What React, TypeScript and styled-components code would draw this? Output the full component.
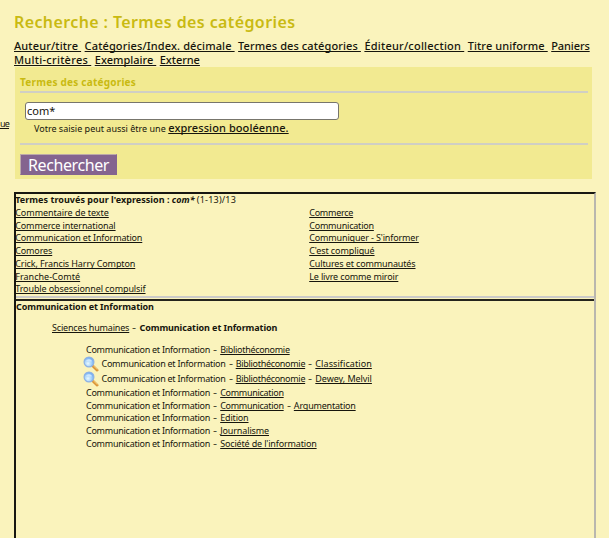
import React from "react";
import styled, { createGlobalStyle } from "styled-components";

const GlobalStyle = createGlobalStyle`
  * { box-sizing: border-box; }
  body {
    margin: 0;
    height: 538px;
    overflow: hidden;
    background: #faf3bc;
    color: #16150c;
    font-family: "Noto Sans", "Open Sans", sans-serif;
  }
`;

const Page = styled.div`
  display: grid;
  grid-template-columns: 14px 582px;
  height: 538px;
  overflow: hidden;
`;

const Side = styled.aside`
  padding-top: 117px;
  display: flex;
  align-items: flex-start;
`;

const Main = styled.main`
  display: flex;
  flex-direction: column;
`;

const Link = styled.a<{ $ls?: number }>`
  color: inherit;
  white-space: pre;
  letter-spacing: ${(p) => p.$ls ?? 0}px;
  text-decoration: underline;
  text-decoration-thickness: 1px;
  text-decoration-skip-ink: none;
  text-underline-offset: 1px;
`;

const SideLink = styled(Link)`
  font-size: 9px;
  line-height: 13px;
`;

const Title = styled.h1`
  margin: 11px 0 0;
  height: 28px;
  font-size: 16px;
  line-height: 22px;
  font-weight: 600;
  letter-spacing: 0.39px;
  color: #c9ba12;
  white-space: nowrap;
`;

const Nav = styled.nav`
  display: flex;
  flex-direction: column;
  height: 28px;
  font-size: 11px;
  line-height: 14px;
  font-weight: 500;
`;

const NavRow = styled.div`
  display: flex;
  gap: 3.5px;
`;

const Panel = styled.form`
  margin: 0 0 0 1px;
  width: 577px;
  height: 112px;
  padding: 8px 4px 0 5px;
  background: #f2ea91;
  display: flex;
  flex-direction: column;
  align-items: flex-start;
`;

const PanelTitle = styled.h2`
  margin: 0;
  height: 16px;
  font-size: 10px;
  line-height: 14px;
  font-weight: 700;
  letter-spacing: 0.23px;
  color: #c9ba12;
`;

const Rule = styled.div`
  flex: none;
  align-self: stretch;
  height: 2px;
  background: #d0cfc4;
`;

const SearchInput = styled.input`
  margin: 9px 0 0 5px;
  width: 314px;
  height: 18px;
  padding: 0 1px 2px;
  border: 1px solid #77756c;
  border-radius: 3px;
  background: #fff;
  color: #16150c;
  font: 11px "Noto Sans", sans-serif;
  outline: none;
`;

const Hint = styled.div`
  display: flex;
  align-items: baseline;
  gap: 2.5px;
  height: 23px;
  padding-left: 14px;
  font-size: 9px;
  line-height: 16px;
`;

const HintLink = styled(Link)`
  font-size: 11px;
  font-weight: 500;
`;

const Submit = styled.button`
  margin-top: 9px;
  width: 97px;
  height: 21px;
  padding: 0;
  border: 1px solid;
  border-color: #bcaaa8 #84648f #84648f #bcaaa8;
  background: #84648f;
  color: #fff;
  font: 16px/18px "Noto Sans", sans-serif;
  letter-spacing: -0.41px;
`;

const Frame = styled.section`
  margin-top: 13px;
  flex: 1;
  border-style: solid;
  border-width: 2px 2px 0 2px;
  border-color: #171711 #b9b7ae #b9b7ae #171711;
  font-size: 9px;
  line-height: 12.75px;
`;

const Found = styled.div`
  height: 102px;
  margin-left: -0.8px;
`;

const FoundHead = styled.div`
  display: flex;
  gap: 2.3px;
  white-space: pre;
`;

const Columns = styled.div`
  display: grid;
  grid-template-columns: 294px 1fr;
`;

const Column = styled.div`
  display: flex;
  flex-direction: column;
  align-items: flex-start;
`;

const Divider = styled.div`
  height: 5px;
  border-top: 2px solid #cbcac8;
  border-bottom: 2px solid #24231c;
`;

const Text = styled.span<{ $ls?: number }>`
  white-space: pre;
  letter-spacing: ${(p) => p.$ls ?? 0}px;
`;

const Strong = styled(Text).attrs({ as: "strong" })`
  font-weight: 700;
`;

const Em = styled(Strong)`
  font-style: italic;
`;

const Path = styled.div`
  display: flex;
  margin: 8.5px 0 8.5px 36px;
`;

const Tree = styled.div`
  padding-left: 67px;
  display: flex;
  flex-direction: column;
`;

const Row = styled.div<{ $icon?: boolean }>`
  display: flex;
  align-items: ${(p) => (p.$icon ? "center" : "baseline")};
  height: ${(p) => (p.$icon ? 15.25 : 12.75)}px;
  padding-left: ${(p) => (p.$icon ? 0 : 3)}px;
`;

const Sep = styled.span`
  display: inline-block;
  width: 10.2px;
  text-align: center;
  transform: scaleX(1.4);
`;

const Lens = styled.svg`
  flex: none;
  width: 16px;
  height: 16px;
  margin-right: 2.5px;
`;

const Magnifier = () => (
  <Lens viewBox="0 0 16 16">
    <defs>
      <radialGradient id="glass" cx="0.4" cy="0.65" r="0.7">
        <stop offset="0" stopColor="#e9f9ff" />
        <stop offset="0.5" stopColor="#a5d3fa" />
        <stop offset="1" stopColor="#5f9df0" />
      </radialGradient>
    </defs>
    <path d="M9.6 9.8L14.2 14.2" stroke="#d99438" strokeWidth="2.6" strokeLinecap="round" />
    <path d="M10.6 10L14.2 13.4" stroke="#f8cf78" strokeWidth="1" strokeLinecap="round" />
    <circle cx="6" cy="6" r="4.9" fill="url(#glass)" stroke="#8eb2e4" strokeWidth="1.2" />
    <path d="M3 5.2C4 2.6 8 2.6 9 5.2C7 6.4 5 4.6 3 5.2Z" fill="#d8ecff" opacity="0.75" />
  </Lens>
);

type Item = [string, number];

const nav: Item[][] = [
  [
    ["Auteur/titre ", 0.13],
    ["Catégories/Index. décimale ", 0.12],
    ["Termes des catégories ", 0.1],
    ["Éditeur/collection ", 0.22],
    ["Titre uniforme ", 0.09],
    ["Paniers", -0.1],
  ],
  [
    ["Multi-critères ", 0.27],
    ["Exemplaire ", 0.02],
    ["Externe", -0.05],
  ],
];

const found: Item[][] = [
  [
    ["Commentaire de texte", -0.04],
    ["Commerce international", -0.11],
    ["Communication et Information", -0.15],
    ["Comores", -0.13],
    ["Crick, Francis Harry Compton", -0.11],
    ["Franche-Comté", 0.03],
    ["Trouble obsessionnel compulsif", -0.1],
  ],
  [
    ["Commerce", -0.25],
    ["Communication", -0.21],
    ["Communiquer - S'informer", -0.15],
    ["C'est compliqué", -0.09],
    ["Cultures et communautés", -0.13],
    ["Le livre comme miroir", -0.14],
  ],
];

const biblio: Item = ["Bibliothéconomie", -0.3];
const communication: Item = ["Communication", -0.3];

const tree: { icon?: boolean; links: Item[] }[] = [
  { links: [biblio] },
  { icon: true, links: [biblio, ["Classification", 0.08]] },
  { icon: true, links: [biblio, ["Dewey, Melvil", -0.05]] },
  { links: [communication] },
  { links: [communication, ["Argumentation", -0.2]] },
  { links: [["Edition", -0.16]] },
  { links: [["Journalisme", -0.13]] },
  { links: [["Société de l'information", -0.16]] },
];

const renderLinks = (items: Item[]) =>
  items.map(([label, ls]) => (
    <Link key={label} $ls={ls}>
      {label}
    </Link>
  ));

export default function App() {
  return (
    <>
      <GlobalStyle />
      <Page>
        <Side>
          <SideLink $ls={-0.8}>ue</SideLink>
        </Side>
        <Main>
          <Title>Recherche : Termes des catégories</Title>
          <Nav>
            {nav.map((row, i) => (
              <NavRow key={i}>{renderLinks(row)}</NavRow>
            ))}
          </Nav>
          <Panel>
            <PanelTitle>Termes des catégories</PanelTitle>
            <Rule />
            <SearchInput defaultValue="com*" />
            <Hint>
              <Text>Votre saisie peut aussi être une</Text>
              <HintLink $ls={0.08}>expression booléenne.</HintLink>
            </Hint>
            <Rule />
            <Submit type="button">Rechercher</Submit>
          </Panel>
          <Frame>
            <Found>
              <FoundHead>
                <Strong $ls={0.04}>Termes trouvés pour l'expression :</Strong>
                <Em>com*</Em>
                <Text $ls={0.2}>(1-13)/13</Text>
              </FoundHead>
              <Columns>
                {found.map((col, i) => (
                  <Column key={i}>{renderLinks(col)}</Column>
                ))}
              </Columns>
            </Found>
            <Divider />
            <Strong $ls={-0.08}>Communication et Information</Strong>
            <Path>
              <Link $ls={-0.17}>Sciences humaines</Link>
              <Sep>-</Sep>
              <Strong $ls={-0.08}>Communication et Information</Strong>
            </Path>
            <Tree>
              {tree.map((row, i) => (
                <Row key={i} $icon={row.icon}>
                  {row.icon && <Magnifier />}
                  <Text $ls={-0.26}>Communication et Information</Text>
                  {row.links.map(([label, ls]) => (
                    <React.Fragment key={label}>
                      <Sep>-</Sep>
                      <Link $ls={ls}>{label}</Link>
                    </React.Fragment>
                  ))}
                </Row>
              ))}
            </Tree>
          </Frame>
        </Main>
      </Page>
    </>
  );
}
